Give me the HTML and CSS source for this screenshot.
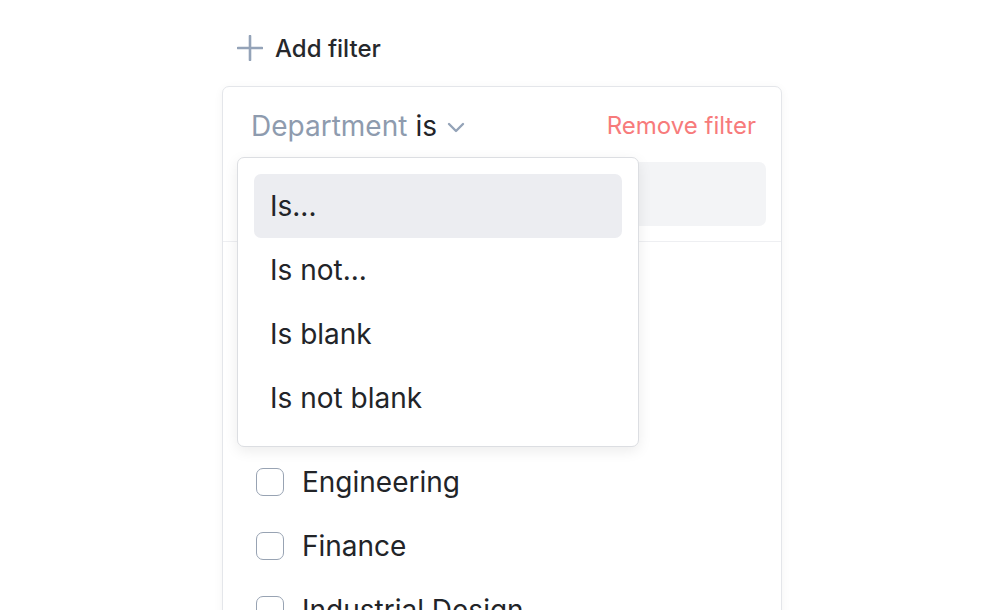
FILE: index.html
```html
<!DOCTYPE html>
<html lang="en">
<head>
<meta charset="utf-8">
<title>Filter</title>
<link rel="stylesheet" href="styles.css">
</head>
<body>
<div class="page">
  <button class="add-filter">
    <svg class="plus" width="26" height="26" viewBox="0 0 26 26" fill="none"><path d="M13 1v24M1 13h24" stroke="#94a3b8" stroke-width="2.6" stroke-linecap="round"/></svg>
    <span>Add filter</span>
  </button>

  <div class="card">
    <div class="card-header">
      <div class="field">
        <span class="field-name">Department</span>
        <span class="field-op">is</span>
        <svg class="chevron" width="18" height="11" viewBox="0 0 18 11" fill="none"><path d="M2 2l7 7 7-7" stroke="#94a3b8" stroke-width="2.4" stroke-linecap="round" stroke-linejoin="round"/></svg>
      </div>
      <span class="remove">Remove filter</span>
    </div>
    <div class="search-wrap">
      <div class="search"></div>
    </div>
    <ul class="options">
      <li class="option"><span class="box"></span>Customer Success</li>
      <li class="option"><span class="box"></span>Data Science</li>
      <li class="option"><span class="box"></span>Design</li>
      <li class="option"><span class="box"></span>Engineering</li>
      <li class="option"><span class="box"></span>Finance</li>
      <li class="option"><span class="box"></span>Industrial Design</li>
    </ul>

    <div class="menu">
      <div class="menu-item active">Is...</div>
      <div class="menu-item">Is not...</div>
      <div class="menu-item">Is blank</div>
      <div class="menu-item">Is not blank</div>
    </div>
  </div>
</div>
</body>
</html>
```

FILE: styles.css
```css
* { box-sizing: border-box; }
html, body {
  margin: 0;
  padding: 0;
  background: #ffffff;
  overflow: hidden;
  height: 610px;
}
body {
  font-family: Inter, "Noto Sans", "Liberation Sans", sans-serif;
  color: #222428;
}
.page {
  padding-left: 222px;
  padding-top: 32px;
}
.add-filter {
  display: flex;
  align-items: center;
  gap: 12px;
  border: 0;
  background: none;
  padding: 0 0 0 15px;
  font: inherit;
  font-size: 24px;
  font-weight: 500;
  color: #26282c;
  height: 32px;
  cursor: pointer;
}
.plus { display: block; }
.card {
  position: relative;
  margin-top: 22px;
  width: 560px;
  height: 560px;
  background: #fff;
  border: 1px solid #e4e6ea;
  border-radius: 7px;
  box-shadow: 0 2px 10px rgba(0, 0, 0, 0.05);
}
.card-header {
  display: flex;
  justify-content: space-between;
  align-items: flex-start;
  padding: 23px 25px 0 28px;
  height: 75px;
  font-size: 28px;
  line-height: 32px;
}
.field {
  display: flex;
  align-items: center;
  gap: 8px;
}
.field-name { color: #8e9bae; }
.field-op { color: #222428; }
.chevron { margin-left: 2px; margin-top: 2px; }
.remove {
  color: #f77b7b;
  font-size: 24px;
}
.search-wrap {
  padding: 0 15px 15px 15px;
  border-bottom: 1px solid #eeeff2;
}
.search {
  height: 64px;
  background: #f3f4f6;
  border-radius: 7px;
}
.options {
  list-style: none;
  margin: 0;
  padding: 16px 0 0 33px;
}
.option {
  display: flex;
  align-items: center;
  gap: 18px;
  height: 64px;
  font-size: 28px;
  color: #222428;
}
.box {
  width: 28px;
  height: 28px;
  border: 1.6px solid #98a3b3;
  border-radius: 7px;
  flex: none;
}
.menu {
  position: absolute;
  left: 14px;
  top: 70px;
  width: 402px;
  padding: 16px;
  background: #fff;
  border: 1px solid #dcdee2;
  border-radius: 7px;
  box-shadow: 0 4px 14px rgba(0, 0, 0, 0.08);
}
.menu-item {
  height: 64px;
  display: flex;
  align-items: center;
  padding-left: 16px;
  font-size: 28px;
  color: #222428;
  border-radius: 7px;
}
.menu-item.active { background: #ecedf1; }
```
